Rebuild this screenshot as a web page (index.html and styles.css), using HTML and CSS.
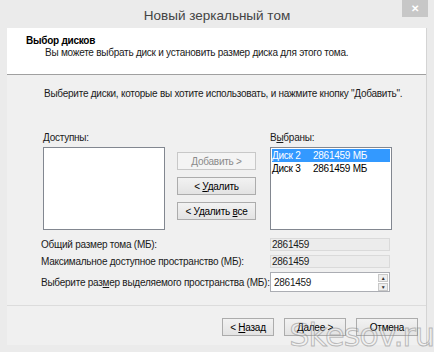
FILE: index.html
```html
<!DOCTYPE html>
<html lang="ru">
<head>
  <meta charset="UTF-8">
  <title>Новый зеркальный том</title>
  <link rel="stylesheet" href="styles.css">
</head>
<body>
  <div class="window">
    <div class="titlebar">
      <span class="title">Новый зеркальный том</span>
      <span class="close">&#x2715;</span>
    </div>

    <div class="client">
      <div class="header">
        <div class="header-title">Выбор дисков</div>
        <div class="header-desc">Вы можете выбрать диск и установить размер диска для этого тома.</div>
      </div>

      <div class="content">
        <p class="intro">Выберите диски, которые вы хотите использовать, и нажмите кнопку "Добавить".</p>

        <div class="picker">
          <div class="col">
            <label class="lbl"><u>Д</u>оступны:</label>
            <div class="listbox"></div>
          </div>
          <div class="actions">
            <button class="btn" disabled><u>Д</u>обавить &gt;</button>
            <button class="btn">&lt; <u>У</u>далить</button>
            <button class="btn">&lt; Удалить <u>в</u>се</button>
          </div>
          <div class="col">
            <label class="lbl">В<u>ы</u>браны:</label>
            <div class="listbox">
              <div class="item selected"><span class="disk">Диск 2</span><span>2861459 МБ</span></div>
              <div class="item"><span class="disk">Диск 3</span><span>2861459 МБ</span></div>
            </div>
          </div>
        </div>

        <div class="fields">
          <span class="flabel">Общий размер тома (МБ):</span>
          <span class="readonly">2861459</span>
          <span class="flabel">Максимальное доступное пространство (МБ):</span>
          <span class="readonly">2861459</span>
          <span class="flabel">Выберите раз<u>м</u>ер выделяемого пространства (МБ):</span>
          <span class="spinner">
            <span class="spin-value">2861459</span>
            <span class="spin-btns">
              <span class="spin up">&#9650;</span>
              <span class="spin down">&#9660;</span>
            </span>
          </span>
        </div>
      </div>

      <div class="footer">
        <button class="btn back">&lt; <u>Н</u>азад</button>
        <button class="btn wide"><u>Д</u>алее &gt;</button>
        <button class="btn wide">Отмена</button>
      </div>
    </div>

    <div class="watermark">Skesov.ru</div>
  </div>
</body>
</html>
```

FILE: styles.css
```css
html, body {
  margin: 0;
  padding: 0;
}
body {
  font-family: "Liberation Sans", Arial, sans-serif;
  font-size: 10px;
  letter-spacing: -0.25px;
  color: #1a1a1a;
  background: #ebebeb;
}
.window {
  position: relative;
  width: 434px;
  height: 352px;
  background: #ebebeb;
  overflow: hidden;
}
.titlebar {
  position: relative;
  height: 28px;
  display: flex;
  align-items: center;
  justify-content: center;
}
.title {
  font-size: 13.5px;
  letter-spacing: 0;
  color: #444;
  margin-top: 2px;
}
.close {
  position: absolute;
  right: 6px;
  top: 0;
  width: 26px;
  height: 17px;
  background: #c7c7c7;
  color: #fff;
  font-size: 10px;
  font-weight: bold;
  display: flex;
  align-items: center;
  justify-content: center;
}
.client {
  margin: 0 7px;
  height: 317px;
  background: #f0f0f0;
  border-right: 1px solid #d4d4d4;
  display: flex;
  flex-direction: column;
}
.header {
  background: #fff;
  height: 47px;
  border-bottom: 1px solid #a0a0a0;
  padding-top: 6px;
  box-sizing: border-box;
}
.header-title {
  font-weight: bold;
  line-height: 13px;
  padding-left: 19px;
  color: #000;
}
.header-desc {
  line-height: 13px;
  padding-left: 38px;
  margin-top: -1px;
}
.content {
  flex: 1;
}
.intro {
  margin: 12px 0 0 37px;
  line-height: 14px;
  white-space: nowrap;
}
.picker {
  display: flex;
  margin: 30px 0 0 36px;
}
.col {
  display: flex;
  flex-direction: column;
  gap: 2px;
}
.lbl {
  line-height: 14px;
}
.listbox {
  width: 118px;
  height: 79px;
  background: #fff;
  border: 1px solid #828790;
  padding: 1px;
}
.item {
  display: flex;
  height: 13px;
  line-height: 13px;
  color: #000;
}
.item.selected {
  background: #3399ff;
  color: #fff;
}
.disk {
  width: 41px;
}
.actions {
  display: flex;
  flex-direction: column;
  gap: 7px;
  margin: 21px 14px 0 12px;
}
.btn {
  font-family: inherit;
  font-size: 10px;
  letter-spacing: inherit;
  color: #000;
  width: 79px;
  height: 18px;
  padding: 0;
  border: 1px solid #acacac;
  background: linear-gradient(#f2f2f2, #e3e3e3);
}
.btn:disabled {
  color: #8a8a8a;
  border-color: #c8c8c8;
  background: #f4f4f4;
}
.fields {
  display: grid;
  grid-template-columns: 229px 120px;
  grid-template-rows: 13px 13px 20px;
  row-gap: 4px;
  margin: 8px 0 0 34px;
  align-items: center;
}
.flabel {
  line-height: 13px;
  white-space: nowrap;
}
.readonly {
  height: 13px;
  line-height: 12px;
  background: #ececec;
  border: 1px solid #dadada;
  box-sizing: border-box;
  padding-left: 1px;
}
.spinner {
  display: flex;
  height: 20px;
  background: #fff;
  border: 1px solid #abadb3;
  box-sizing: border-box;
  align-items: center;
}
.spin-value {
  flex: 1;
  padding-left: 3px;
}
.spin-btns {
  display: flex;
  flex-direction: column;
  width: 10px;
  margin-right: 1px;
  gap: 1px;
}
.spin {
  height: 8px;
  font-size: 5px;
  line-height: 7px;
  text-align: center;
  border: 1px solid #c8c8c8;
  background: #eee;
  color: #333;
  box-sizing: border-box;
}
.footer {
  height: 40px;
  border-top: 1px solid #dcdcdc;
  display: flex;
  justify-content: flex-end;
  gap: 10px;
  padding: 12px 8px 0 0;
  box-sizing: border-box;
}
.btn.back {
  width: 52px;
}
.btn.wide {
  width: 62px;
}
.watermark {
  position: absolute;
  right: 0;
  bottom: 1px;
  font-family: "DejaVu Sans", sans-serif;
  font-size: 32px;
  line-height: 32px;
  color: rgba(255, 255, 255, 0.15);
  -webkit-text-stroke: 1px rgba(130, 130, 130, 0.5);
  letter-spacing: -1px;
}
```
